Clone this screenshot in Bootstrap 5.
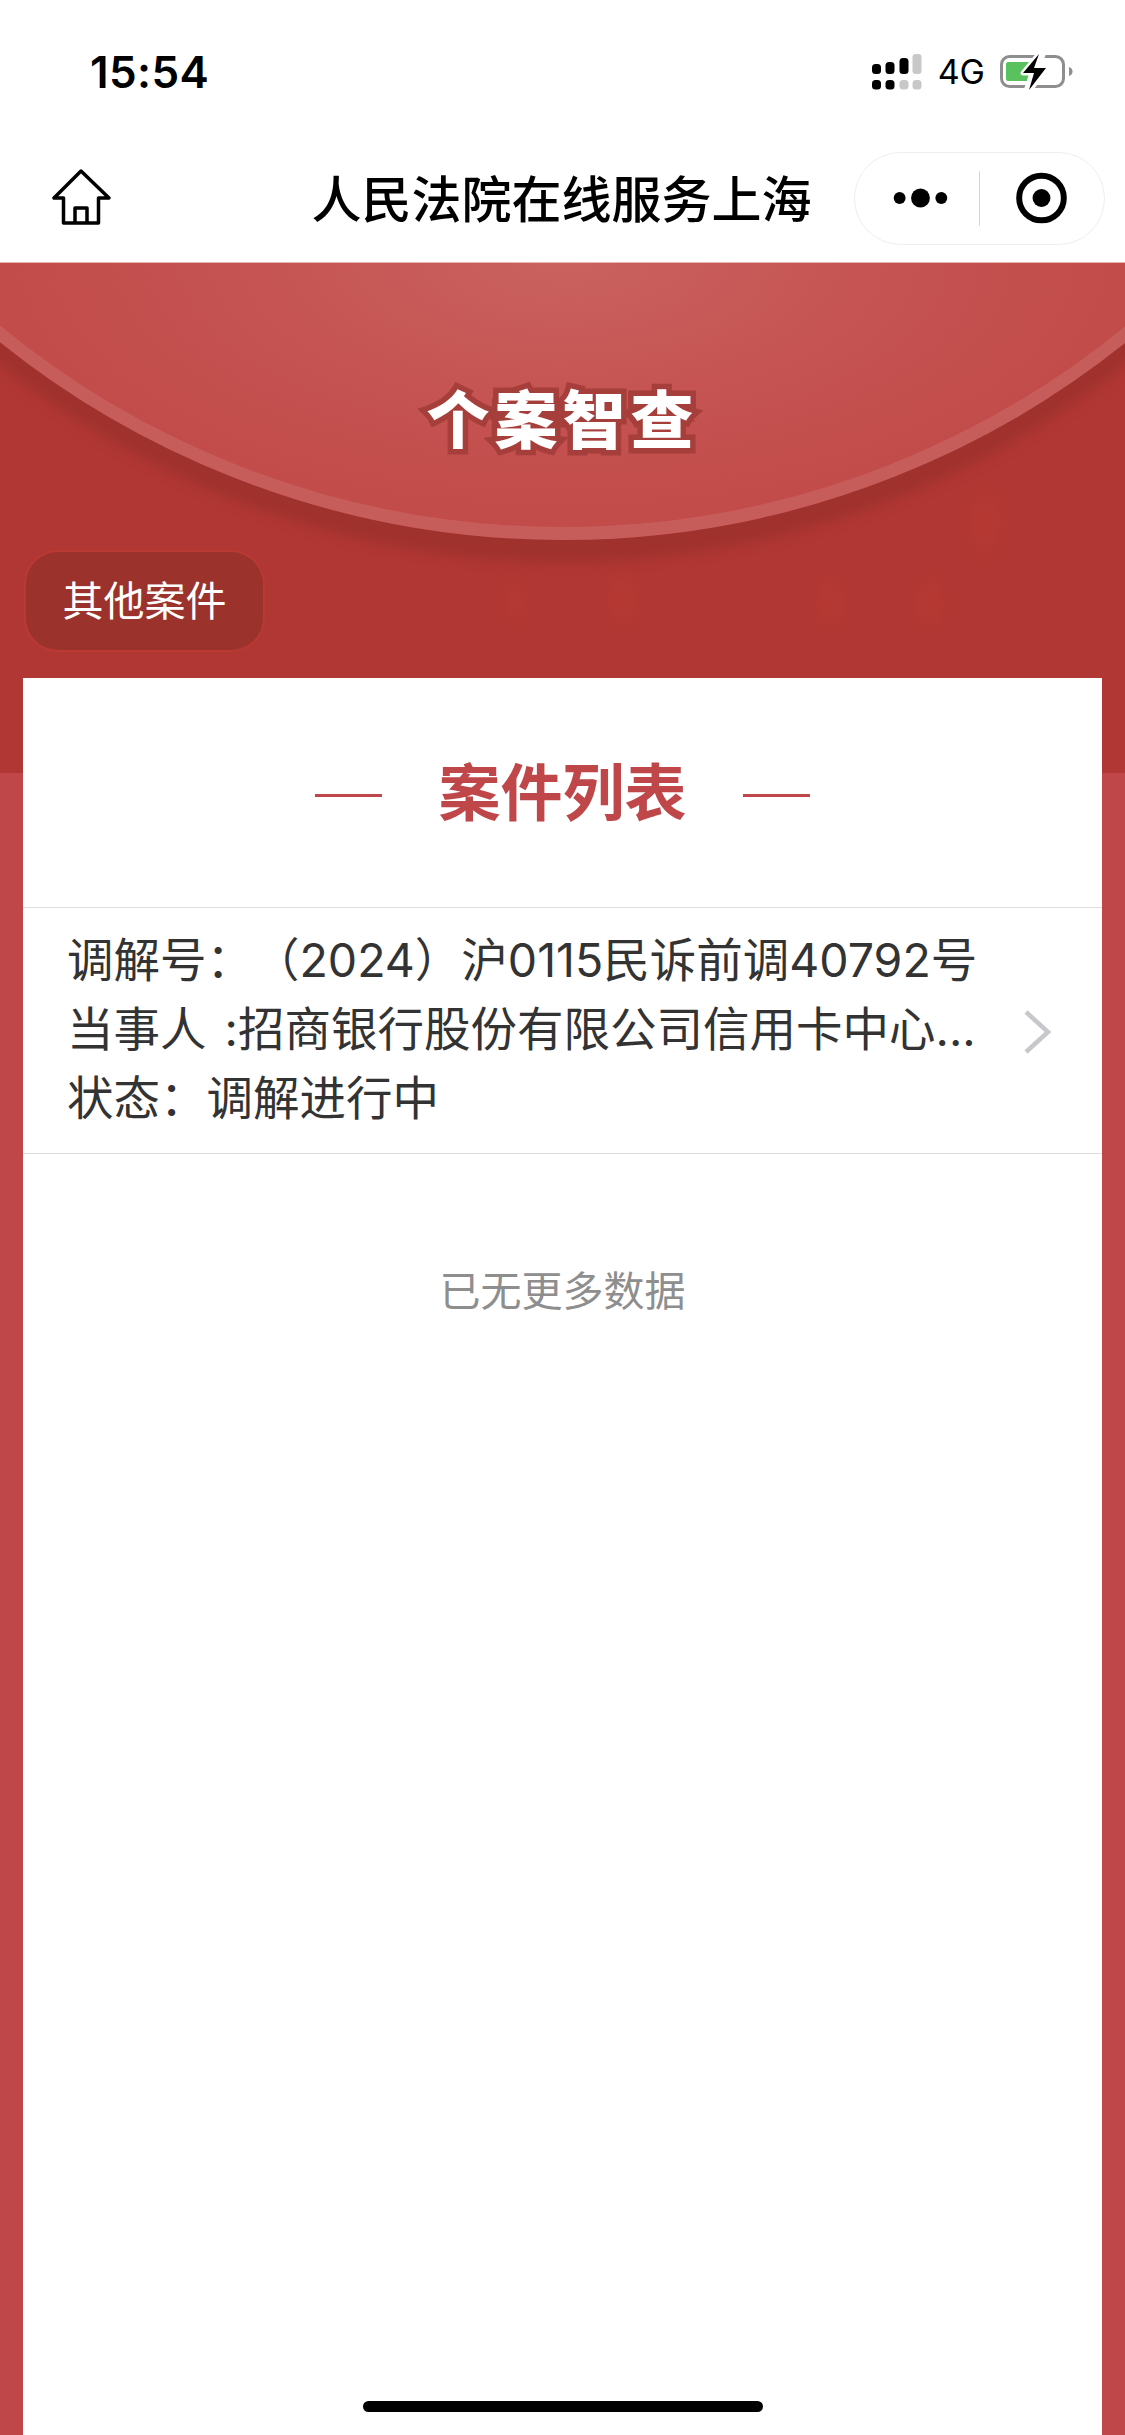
<!DOCTYPE html>
<html lang="zh-CN">
<head>
  <meta charset="UTF-8">
  <meta name="viewport" content="width=device-width, initial-scale=1.0">
  <title>个案智查</title>
  <link href="https://cdn.jsdelivr.net/npm/bootstrap@5.3.0/dist/css/bootstrap.min.css" rel="stylesheet">
  <style>
    html, body {
      height: 2435px;
      overflow: hidden;
    }
    body {
      font-family: "Inter", "Noto Sans CJK SC", sans-serif;
      background: #bf474a;
      color: #333;
      text-spacing-trim: space-all;
    }
    .app-shell {
      position: relative;
      height: 2435px;
    }
    .status-row {
      height: 135px;
      background: #fff;
      padding: 0 52px 0 90px;
      color: #000;
    }
    .status-time {
      font-size: 44px;
      font-weight: 600;
      line-height: 1;
      margin-top: 8px;
      letter-spacing: .4px;
    }
    .status-net {
      font-size: 34px;
      line-height: 1;
      margin: 0 15px 0 16px;
    }
    .status-icons {
      margin-top: 8px;
    }
    .nav-row {
      height: 127px;
      background: #fff;
      padding: 0 20px 0 52px;
    }
    .nav-title {
      position: absolute;
      left: 0;
      right: 0;
      text-align: center;
      font-size: 50px;
      font-weight: 500;
      line-height: 1;
      color: #000;
      padding-right: 2px;
      padding-top: 3px;
    }
    .capsule-box {
      width: 251px;
      height: 93px;
      border: 1.5px solid #eeeeee;
      border-radius: 47px;
      background: #fff;
    }
    .banner-box {
      position: relative;
      height: 511px;
      overflow: hidden;
      border-top: 1px solid #e8b4b2;
      background:
        radial-gradient(ellipse 22px 34px at 155px 345px, rgba(200,60,50,.2), transparent),
        radial-gradient(ellipse 22px 34px at 515px 340px, rgba(200,60,50,.2), transparent),
        radial-gradient(ellipse 24px 36px at 622px 337px, rgba(200,60,50,.3), transparent),
        radial-gradient(ellipse 24px 36px at 830px 340px, rgba(200,60,50,.28), transparent),
        radial-gradient(ellipse 24px 36px at 930px 340px, rgba(200,60,50,.28), transparent),
        radial-gradient(ellipse 30px 50px at 985px 260px, rgba(200,60,50,.25), transparent),
        #b03733;
    }
    .banner-arc {
      position: absolute;
      left: 50%;
      top: -1523px;
      width: 1800px;
      height: 1800px;
      margin-left: -900px;
      border-radius: 50%;
      border: 13px solid #c75d5b;
      background: radial-gradient(ellipse 560px 250px at 50% 85%, #ca6260 0, #c55452 55%, #c24c4a 100%);
      box-shadow: 0 22px 12px #a0322e;
    }
    .banner-title {
      position: relative;
      margin: 0;
      padding-top: 118px;
      text-align: center;
      font-size: 63px;
      font-weight: 900;
      line-height: 1.25;
      letter-spacing: 5px;
      color: #fff;
      -webkit-text-stroke: 11px #a63f3b;
      paint-order: stroke fill;
    }
    .other-btn {
      position: relative;
      display: block;
      margin: 92px 0 0 26px;
      width: 237px;
      height: 98px;
      padding: 0;
      border: 0;
      border-radius: 32px;
      background: #9b332c;
      box-shadow: 0 0 0 2px #b93a33;
      color: #fff;
      font-size: 41px;
      line-height: 98px;
    }
    .case-sheet {
      position: relative;
      margin: -95px 23px 0;
      height: 1758px;
      background: #fff;
    }
    .sheet-head {
      height: 229px;
      gap: 56px;
      color: #bf474a;
      font-size: 62px;
      font-weight: 700;
      line-height: 1;
      padding-top: 2px;
    }
    .head-rule {
      display: block;
      width: 67px;
      height: 3px;
      background: #bf474a;
      margin-top: 3px;
    }
    .case-list {
      border-top: 1.5px solid #dddddd;
      border-bottom: 1.5px solid #dddddd;
    }
    .case-row {
      height: 245px;
      padding: 18px 50px 0 44px;
      border: 0;
      background: #fff;
    }
    .case-line {
      height: 69px;
      font-size: 46.5px;
      line-height: 69px;
      color: #333;
      white-space: nowrap;
    }
    .mid-colon {
      font-family: "Noto Sans CJK TC", sans-serif;
      line-height: 1;
    }
    .wide-space {
      word-spacing: 5px;
    }
    .no-more {
      padding-top: 110px;
      text-align: center;
      font-size: 41px;
      line-height: 54px;
      color: #8e8e8e;
    }
    .home-bar {
      position: absolute;
      left: 363px;
      top: 2401px;
      width: 400px;
      height: 11px;
      border-radius: 6px;
      background: #000;
    }
  </style>
</head>
<body>
  <div class="app-shell">
    <div class="status-row d-flex justify-content-between align-items-center">
      <span class="status-time">15:54</span>
      <div class="status-icons d-flex align-items-center">
        <svg width="50" height="36" viewBox="0 0 50 36">
          <g fill="#000">
            <rect x="0" y="10" width="9" height="10" rx="3.500"/>
            <rect x="13.500" y="8" width="9" height="12" rx="3.500"/>
            <rect x="27.500" y="4" width="9" height="16" rx="3.500"/>
            <rect x="0" y="26" width="9" height="9.500" rx="3.500"/>
            <rect x="13.500" y="26" width="9" height="9.500" rx="3.500"/>
          </g>
          <g fill="#c8c8c8">
            <rect x="40.500" y="0" width="9" height="20" rx="3"/>
            <rect x="27.500" y="26" width="9" height="9.500" rx="3.500"/>
            <rect x="40.500" y="26" width="9" height="9.500" rx="3.500"/>
          </g>
        </svg>
        <span class="status-net">4G</span>
        <svg width="73" height="38" viewBox="0 0 73 38">
          <rect x="1.500" y="3.500" width="62" height="30" rx="8" fill="none" stroke="#8e8e8e" stroke-width="3"/>
          <path d="M69 14c2.500.8 3.500 2.500 3.500 4.500S71.500 22.200 69 23z" fill="#8e8e8e"/>
          <path d="M8 9h23l-9 11h8v8H8a2 2 0 0 1-2-2V11a2 2 0 0 1 2-2z" fill="#5ac15f"/>
          <path d="M23 20l15-18h5l-6 13h11L29 38h-3l6-18z" fill="#fff" stroke="#fff" stroke-width="5" stroke-linejoin="round"/>
          <path d="M23 20L39 1l-5 14h12L29 37l5-17z" fill="#000"/>
        </svg>
      </div>
    </div>

    <nav class="nav-row d-flex justify-content-between align-items-center position-relative">
      <svg width="60" height="56" viewBox="0 0 60 56" class="mb-1">
        <path d="M29 2L2 29h9.500v25h35V29H57zM23 54V39h12v15" fill="#fff" stroke="#000" stroke-width="3.500" stroke-linejoin="round"/>
      </svg>
      <div class="nav-title">人民法院在线服务上海</div>
      <div class="capsule-box d-flex align-items-center position-relative">
        <svg width="251" height="93" viewBox="0 0 251 93">
          <circle cx="45" cy="46" r="6"/>
          <circle cx="66" cy="46" r="9.500"/>
          <circle cx="87" cy="46" r="6"/>
          <rect x="125" y="19" width="1" height="55" fill="#d4d4d4"/>
          <circle cx="188" cy="46" r="22.500" fill="none" stroke="#000" stroke-width="6"/>
          <circle cx="188" cy="46" r="9"/>
        </svg>
      </div>
    </nav>

    <section class="banner-box">
      <div class="banner-arc"></div>
      <h1 class="banner-title">个案智查</h1>
      <button type="button" class="btn other-btn">其他案件</button>
    </section>

    <main class="case-sheet">
      <div class="sheet-head d-flex justify-content-center align-items-center">
        <span class="head-rule"></span>
        <span>案件列表</span>
        <span class="head-rule"></span>
      </div>
      <div class="list-group list-group-flush rounded-0 case-list">
        <div class="list-group-item case-row d-flex justify-content-between align-items-center">
          <div class="align-self-start">
            <div class="case-line">调解号<span class="mid-colon">：</span>（2024）沪0115民诉前调40792号</div>
            <div class="case-line"><span class="wide-space">当事人 :</span>招商银行股份有限公司信用卡中心...</div>
            <div class="case-line">状态<span class="mid-colon">：</span>调解进行中</div>
          </div>
          <svg width="30" height="44" viewBox="0 0 30 44" class="mb-3">
            <path d="M4 2l22 20L4 42" fill="none" stroke="#c8c8cc" stroke-width="4.500"/>
          </svg>
        </div>
      </div>
      <div class="no-more">已无更多数据</div>
    </main>

    <div class="home-bar"></div>
  </div>
  <script src="https://cdn.jsdelivr.net/npm/bootstrap@5.3.0/dist/js/bootstrap.bundle.min.js"></script>
</body>
</html>
